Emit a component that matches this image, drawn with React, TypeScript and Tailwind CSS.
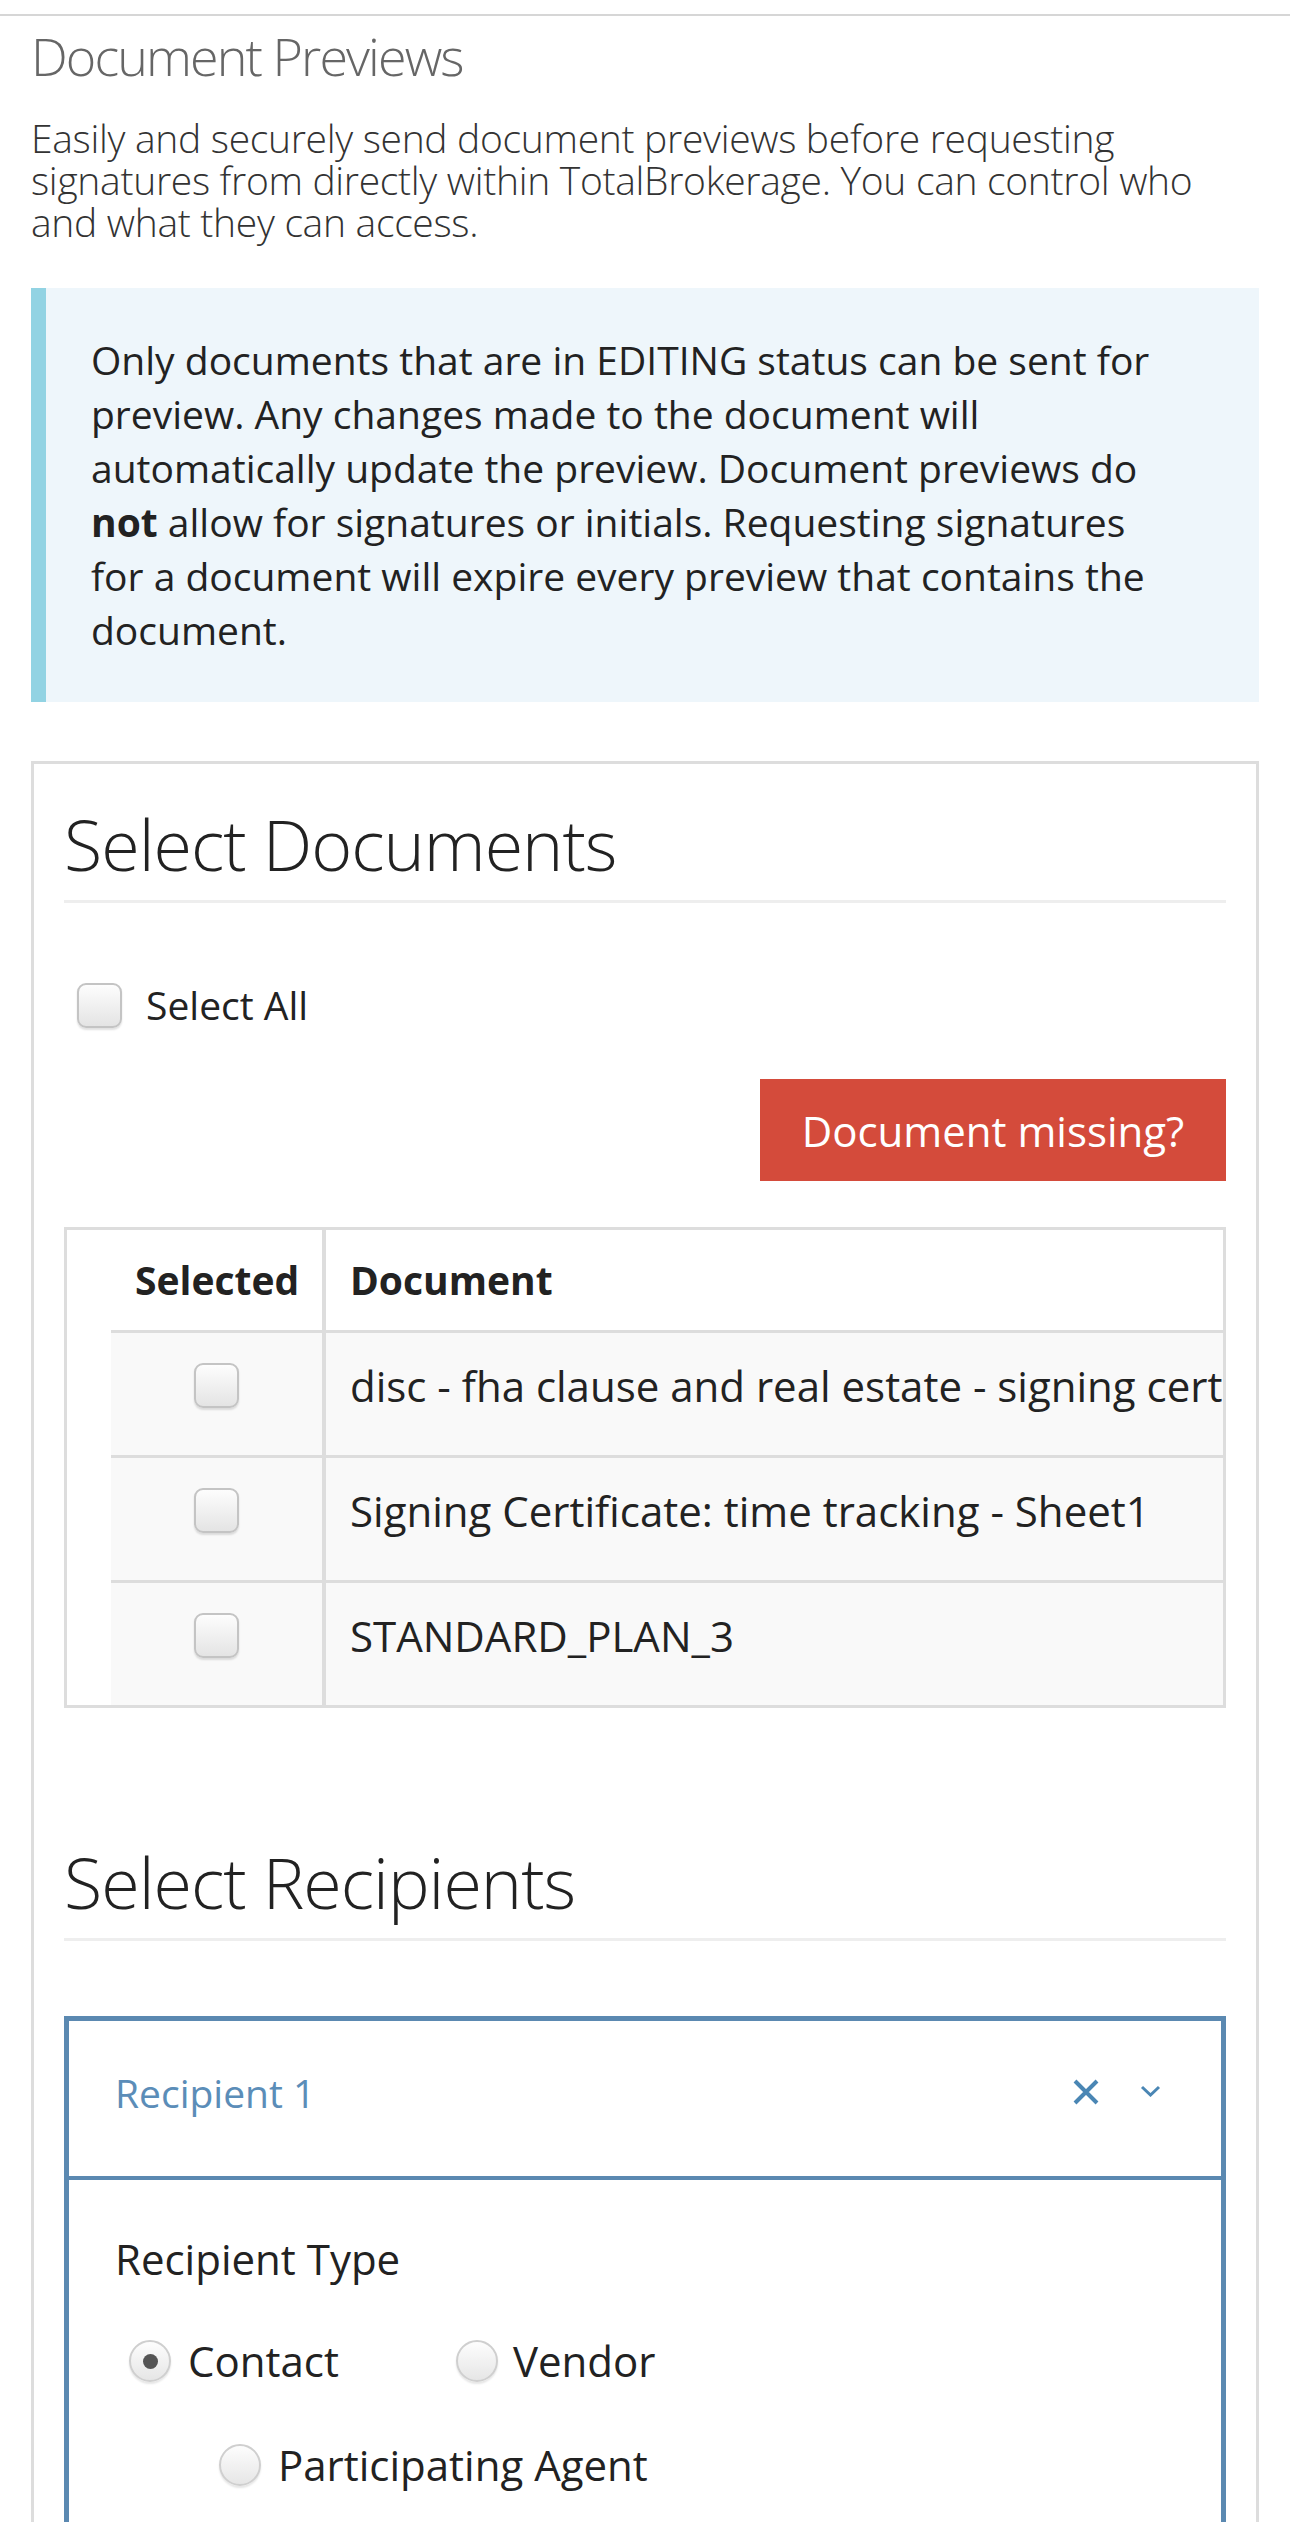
import React from "react";

const docs = [
  "disc - fha clause and real estate - signing certificate",
  "Signing Certificate: time tracking - Sheet1",
  "STANDARD_PLAN_3",
];

function FakeCheckbox() {
  return (
    <span className="block w-[45px] h-[45px] shrink-0 rounded-[9px] border-2 border-[#c4c4c4] bg-linear-to-b from-[#fdfdfd] to-[#e4e4e4] shadow-[0_2px_2px_rgba(0,0,0,0.12)]" />
  );
}

function FakeRadio({ checked = false }: { checked?: boolean }) {
  return (
    <span className="flex items-center justify-center w-[42px] h-[42px] shrink-0 rounded-full border-2 border-[#cfcfcf] bg-linear-to-b from-[#fdfdfd] to-[#e6e6e6] shadow-[0_2px_2px_rgba(0,0,0,0.1)]">
      {checked && <span className="block w-[15px] h-[15px] rounded-full bg-[#555]" />}
    </span>
  );
}

export default function App() {
  return (
    <div className="h-[2522px] overflow-hidden bg-white font-['Open_Sans',sans-serif] text-[#222]">
      <div className="h-[16px] border-b-2 border-[#d6d6d6]" />

      <div className="px-[31px]">
        {/* Page heading */}
        <h1 className="mt-[11px] text-[52px] leading-[57px] font-light text-[#666] tracking-[-1.9px]">
          Document Previews
        </h1>
        <p className="mt-[33px] text-[39px] leading-[42px] font-light text-[#333] tracking-[-0.3px]">
          Easily and securely send document previews before requesting signatures from directly within
          TotalBrokerage. You can control who and what they can access.
        </p>

        {/* Info callout */}
        <div className="mt-[45px] border-l-[15px] border-[#92d3e3] bg-[#eef6fb] py-[45px] pl-[45px] pr-[80px] text-[39px] leading-[54px] text-[#222]">
          Only documents that are in EDITING status can be sent for preview. Any changes made to the document
          will automatically update the preview. Document previews do <b className="font-bold">not</b> allow
          for signatures or initials. Requesting signatures for a document will expire every preview that
          contains the document.
        </div>

        {/* Main card */}
        <div className="mt-[59px] border-[3px] border-b-0 border-[#ddd] px-[30px] pb-[200px]">
          <h2 className="mt-[42px] pb-[17px] border-b-[3px] border-[#eee] text-[70px] leading-[77px] font-light text-[#222] tracking-[-1px]">
            Select Documents
          </h2>

          <label className="mt-[75px] h-[54px] flex items-center gap-[24px] pl-[13px] text-[39px]">
            <FakeCheckbox />
            <span>Select All</span>
          </label>

          <div className="mt-[47px] flex justify-end">
            <button className="w-[466px] h-[102px] bg-[#d44b3b] text-white text-[42px]">
              Document missing?
            </button>
          </div>

          {/* Documents table */}
          <div className="mt-[46px] border-[3px] border-[#ddd] overflow-hidden">
            <div className="flex h-[100px] text-[39px] font-bold">
              <div className="w-[259px] shrink-0 border-r-4 border-[#ddd] flex items-center pl-[68px]">
                Selected
              </div>
              <div className="flex items-center pl-[24px]">Document</div>
            </div>
            <div className="pl-[44px]">
              {docs.map((d) => (
                <div key={d} className="flex h-[125px] border-t-[3px] border-[#ddd] bg-[#f9f9f9] text-[42px]">
                  <div className="w-[215px] shrink-0 border-r-4 border-[#ddd] flex justify-center pt-[30px]">
                    <FakeCheckbox />
                  </div>
                  <div className="pl-[24px] pt-[26px] leading-[54px] whitespace-nowrap">{d}</div>
                </div>
              ))}
            </div>
          </div>

          <h2 className="mt-[136px] pb-[17px] border-b-[3px] border-[#eee] text-[70px] leading-[77px] font-light text-[#222] tracking-[-1px]">
            Select Recipients
          </h2>

          {/* Recipient panel */}
          <div className="mt-[75px] border-[5px] border-[#5b89b1]">
            <div className="h-[159px] flex items-center border-b-4 border-[#5b89b1] pl-[46px] pr-[60px] pb-[10px]">
              <span className="flex-1 text-[39px] text-[#5b8db8]">Recipient 1</span>
              <svg width="26" height="26" viewBox="0 0 26 26" className="mt-[-4px]">
                <path d="M2 2 L24 24 M24 2 L2 24" stroke="#4a86b4" strokeWidth="4" fill="none" />
              </svg>
              <svg width="21" height="12" viewBox="0 0 21 12" className="ml-[41px] mt-[-6px]">
                <path d="M2 2 L10.5 10 L19 2" stroke="#4a86b4" strokeWidth="3" fill="none" />
              </svg>
            </div>
            <div className="pl-[46px] pt-[52px] pb-[200px] text-[42px]">
              <div className="leading-[54px]">Recipient Type</div>
              <div className="mt-[48px] flex items-center pl-[14px]">
                <FakeRadio checked />
                <span className="ml-[17px] leading-[54px]">Contact</span>
                <span className="ml-[117px]">
                  <FakeRadio />
                </span>
                <span className="ml-[15px] leading-[54px]">Vendor</span>
              </div>
              <div className="mt-[50px] flex items-center pl-[104px]">
                <FakeRadio />
                <span className="ml-[17px] leading-[54px]">Participating Agent</span>
              </div>
            </div>
          </div>
        </div>
      </div>
    </div>
  );
}
